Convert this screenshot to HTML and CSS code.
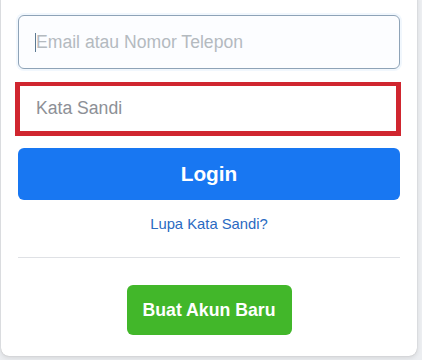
FILE: index.html
```html
<!DOCTYPE html>
<html lang="id">
<head>
<meta charset="utf-8">
<title>Login</title>
<link rel="stylesheet" href="styles.css">
</head>
<body>
<div class="card">
  <form class="login-form">
    <div class="field">
      <input class="text-input focused" type="text" placeholder="Email atau Nomor Telepon">
      <span class="caret"></span>
    </div>
    <input class="text-input highlighted" type="password" placeholder="Kata Sandi">
    <button class="btn-login" type="button">Login</button>
    <div class="forgot"><a class="forgot-link" href="#">Lupa Kata Sandi?</a></div>
    <div class="divider"></div>
    <div class="create-row"><button class="btn-create" type="button">Buat Akun Baru</button></div>
  </form>
</div>
</body>
</html>
```
FILE: styles.css
```css
html, body {
  margin: 0;
  padding: 0;
  height: 100%;
  overflow: hidden;
}
body {
  background: #eceef1;
  font-family: "Liberation Sans", Arial, Helvetica, sans-serif;
}
.card {
  box-sizing: border-box;
  width: 416px;
  margin: -10px 0 0 1px;
  padding: 25px 17px 21px 17px;
  background: #ffffff;
  border-radius: 8px;
  box-shadow: 0 0 1px rgba(0, 0, 0, 0.28), 0 2px 5px rgba(0, 0, 0, 0.10);
}
.login-form {
  display: flex;
  flex-direction: column;
  margin: 0;
}
.field {
  position: relative;
  display: flex;
}
.text-input {
  box-sizing: border-box;
  width: 100%;
  height: 54px;
  margin: 0;
  padding: 0 16px 0 17px;
  font-family: "Liberation Sans", Arial, Helvetica, sans-serif;
  font-size: 17.6px;
  color: #1c1e21;
  background: #ffffff;
  outline: none;
}
.focused {
  border: 1px solid #8ea3b7;
  border-radius: 6px;
  background: #fcfdff;
  box-shadow: 0 0 0 2px #f1f7fd;
}
.focused::placeholder {
  color: #b4babf;
  opacity: 1;
}
.caret {
  position: absolute;
  left: 17px;
  top: 18px;
  width: 1px;
  height: 19px;
  background: #5d7a93;
}
.highlighted {
  margin: 13px -1px 0 -3px;
  width: auto;
  padding-left: 16px;
  border: 5px solid #d0262f;
  border-top-width: 4px;
  border-radius: 0;
}
.highlighted::placeholder {
  color: #8d9096;
  opacity: 1;
}
.btn-login {
  height: 52px;
  margin-top: 12px;
  border: none;
  border-radius: 6px;
  background: #1877f2;
  color: #ffffff;
  font-family: "Liberation Sans", Arial, Helvetica, sans-serif;
  font-size: 20.8px;
  font-weight: bold;
  cursor: pointer;
}
.forgot {
  margin-top: 14px;
  line-height: 20px;
  text-align: center;
}
.forgot-link {
  font-size: 14.8px;
  color: #2a6ac2;
  text-decoration: none;
}
.divider {
  height: 1px;
  margin-top: 23px;
  background: #dfe1e5;
}
.create-row {
  display: flex;
  justify-content: center;
  margin-top: 27px;
}
.btn-create {
  height: 50px;
  padding: 0 16px;
  border: none;
  border-radius: 6px;
  background: #42b72a;
  color: #ffffff;
  font-family: "Liberation Sans", Arial, Helvetica, sans-serif;
  font-size: 17.7px;
  font-weight: bold;
  cursor: pointer;
}
```
